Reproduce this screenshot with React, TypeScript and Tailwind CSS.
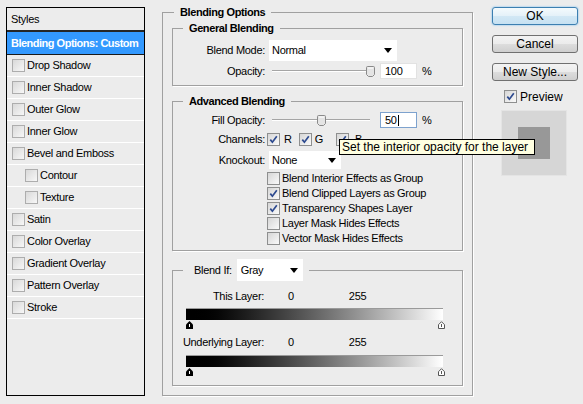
import React from "react";

function Check() {
  return (
    <svg width="9" height="9" viewBox="0 0 9 9" className="block">
      <path d="M1.3 4.6 L3.4 7.2 L7.8 1.3" fill="none" stroke="#2d4a8f" strokeWidth="1.7" />
    </svg>
  );
}

function Box({ checked, light }: { checked?: boolean; light?: boolean }) {
  return (
    <span
      className={
        light
          ? "flex h-[13px] w-[13px] shrink-0 items-center justify-center border border-[#adadad] bg-gradient-to-br from-[#d9d9d9] to-[#f7f7f7]"
          : "flex h-[13px] w-[13px] shrink-0 items-center justify-center border border-[#8e8f8f] bg-gradient-to-br from-[#d6d6d6] to-[#fafafa]"
      }
    >
      {checked && <Check />}
    </span>
  );
}

function Arrow() {
  return (
    <svg width="8" height="5" viewBox="0 0 8 5" className="block">
      <path d="M0 0 H8 L4 5 Z" fill="#000" />
    </svg>
  );
}

function Thumb() {
  return (
    <svg width="9" height="11" viewBox="0 0 9 11" className="block">
      <path
        d="M1.5 0.5 H7.5 Q8.5 0.5 8.5 1.5 V8.5 L6.5 10.5 H2.5 L0.5 8.5 V1.5 Q0.5 0.5 1.5 0.5 Z"
        fill="#e4e4e4"
        stroke="#8a8a8a"
      />
      <path d="M2 2 H7" stroke="#fff" />
    </svg>
  );
}

function SliderThumb({ dark }: { dark?: boolean }) {
  return (
    <svg width="7" height="8" viewBox="0 0 7 8" className="block">
      {dark ? (
        <>
          <path d="M3.5 0 L7 3.5 V8 H0 V3.5 Z" fill="#000" />
          <path d="M3.5 3 V6" stroke="#fff" strokeWidth="1" />
        </>
      ) : (
        <>
          <path d="M3.5 0.7 L6.5 3.7 V7.5 H0.5 V3.7 Z" fill="#fff" stroke="#555" />
          <path d="M3.5 3 V6" stroke="#555" strokeWidth="1" />
        </>
      )}
    </svg>
  );
}

const styleItems: [string, boolean][] = [
  ["Drop Shadow", false],
  ["Inner Shadow", false],
  ["Outer Glow", false],
  ["Inner Glow", false],
  ["Bevel and Emboss", false],
  ["Contour", true],
  ["Texture", true],
  ["Satin", false],
  ["Color Overlay", false],
  ["Gradient Overlay", false],
  ["Pattern Overlay", false],
  ["Stroke", false],
];

const checkRows: [string, boolean][] = [
  ["Blend Interior Effects as Group", false],
  ["Blend Clipped Layers as Group", true],
  ["Transparency Shapes Layer", true],
  ["Layer Mask Hides Effects", false],
  ["Vector Mask Hides Effects", false],
];

const fs = "border border-[#a0a0a0] shadow-[1px_1px_0_#ffffff]";

export default function App() {
  return (
    <div className="relative flex h-[404px] w-[583px] items-start overflow-hidden bg-[#ececec] font-['Liberation_Sans',Arial,sans-serif] text-[11px] tracking-[-0.3px] text-black">
      {/* Styles list */}
      <div className="ml-[6px] mt-[7px] flex h-[389px] w-[139px] flex-col border border-black bg-[#ececec]">
        <div className="flex h-[24px] items-center border-b-2 border-[#262626] pl-[4px]">Styles</div>
        <div className="flex h-[23px] items-center border-b border-[#1a1a1a] bg-[#3399ff] pl-[4px] font-bold tracking-[-0.5px] text-white">
          Blending Options: Custom
        </div>
        {styleItems.map(([label, indent]) => (
          <div
            key={label}
            className={
              indent
                ? "flex h-[22px] items-center gap-[2px] border-b border-white pl-[18px]"
                : "flex h-[22px] items-center gap-[2px] border-b border-white pl-[5px]"
            }
          >
            <Box light />
            <span>{label}</span>
          </div>
        ))}
      </div>

      {/* Blending Options */}
      <fieldset className={`ml-[17px] mt-[5px] h-[391px] w-[311px] p-0 ${fs}`}>
        <legend className="ml-[11px] px-[6px] font-bold leading-[14px] tracking-[-0.4px]">Blending Options</legend>

        {/* General Blending */}
        <fieldset className={`mx-[9px] mt-[2px] h-[65px] p-0 ${fs}`}>
          <legend className="ml-[10px] px-[6px] font-bold leading-[14px] tracking-[-0.4px]">General Blending</legend>
          <div className="mt-[5px] flex h-[21px] items-center">
            <span className="w-[92px] text-right">Blend Mode:</span>
            <div className="ml-[4px] flex h-[21px] w-[128px] items-center justify-between bg-white pl-[3px] pr-[5px]">
              <span>Normal</span>
              <Arrow />
            </div>
          </div>
          <div className="mt-[2px] flex h-[16px] items-center">
            <span className="w-[92px] text-right">Opacity:</span>
            <div className="relative ml-[4px] h-[16px] w-[105px]">
              <div className="absolute left-[3px] top-[7px] h-[2px] w-[96px] border-t border-b border-t-[#a5a5a5] border-b-white" />
              <div className="absolute left-[97px] top-[3px]">
                <Thumb />
              </div>
            </div>
            <div className="ml-[6px] flex h-[16px] w-[37px] items-center border border-[#e2e2e2] bg-white pl-[4px]">100</div>
            <span className="ml-[5px]">%</span>
          </div>
        </fieldset>

        {/* Advanced Blending */}
        <fieldset className={`mx-[9px] mt-[8px] h-[157px] p-0 ${fs}`}>
          <legend className="ml-[10px] px-[6px] font-bold leading-[14px] tracking-[-0.4px]">Advanced Blending</legend>
          <div className="mt-[4px] flex h-[16px] items-center">
            <span className="w-[92px] text-right">Fill Opacity:</span>
            <div className="relative ml-[4px] h-[16px] w-[105px]">
              <div className="absolute left-[3px] top-[7px] h-[2px] w-[98px] border-t border-b border-t-[#a5a5a5] border-b-white" />
              <div className="absolute left-[48px] top-[3px]">
                <Thumb />
              </div>
            </div>
            <div className="ml-[6px] flex h-[16px] w-[37px] items-center border border-[#7da2ce] bg-white pl-[4px]">
              50<span className="ml-[1px] h-[11px] w-px bg-black" />
            </div>
            <span className="ml-[5px]">%</span>
          </div>
          <div className="mt-[4px] flex h-[15px] items-center">
            <span className="w-[92px] text-right">Channels:</span>
            <span className="ml-[2px]">
              <Box checked />
            </span>
            <span className="ml-[4px]">R</span>
            <span className="ml-[7px]">
              <Box checked />
            </span>
            <span className="ml-[3px]">G</span>
            <span className="ml-[13px]">
              <Box checked />
            </span>
            <span className="ml-[6px]">B</span>
          </div>
          <div className="mt-[4px] flex h-[18px] items-center">
            <span className="w-[92px] text-right">Knockout:</span>
            <div className="ml-[4px] flex h-[18px] w-[72px] items-center justify-between bg-white pl-[3px] pr-[5px]">
              <span>None</span>
              <Arrow />
            </div>
          </div>
          <div className="mt-[2px] flex flex-col">
            {checkRows.map(([label, checked]) => (
              <div key={label} className="flex h-[15px] items-center pl-[94px]">
                <Box checked={checked} />
                <span className="ml-[2px]">{label}</span>
              </div>
            ))}
          </div>
        </fieldset>

        {/* Blend If */}
        <fieldset className={`mx-[9px] mt-[8px] h-[127px] p-0 ${fs}`}>
          <legend className="ml-[10px] pl-[11px] pr-[6px]">
            <div className="flex items-center">
              <span>Blend If:</span>
              <div className="ml-[5px] flex h-[22px] w-[66px] items-center justify-between bg-white pl-[4px] pr-[5px]">
                <span>Gray</span>
                <Arrow />
              </div>
            </div>
          </legend>
          <div className="mt-[8px] flex h-[14px] items-center">
            <span className="w-[91px] text-right">This Layer:</span>
            <span className="ml-[24px]">0</span>
            <span className="ml-[55px]">255</span>
          </div>
          <div className="ml-[13px] mt-[5px] h-[12px] w-[257px] border-t border-[#9a9a9a] bg-gradient-to-r from-black to-white" />
          <div className="ml-[13px] mt-[1px] flex h-[8px] w-[259px] justify-between">
            <SliderThumb dark />
            <SliderThumb />
          </div>
          <div className="mt-[6px] flex h-[14px] items-center">
            <span className="w-[91px] text-right">Underlying Layer:</span>
            <span className="ml-[24px]">0</span>
            <span className="ml-[55px]">255</span>
          </div>
          <div className="ml-[13px] mt-[6px] h-[12px] w-[257px] border-t border-[#9a9a9a] bg-gradient-to-r from-black to-white" />
          <div className="ml-[13px] mt-[1px] flex h-[8px] w-[259px] justify-between">
            <SliderThumb dark />
            <SliderThumb />
          </div>
        </fieldset>
      </fieldset>

      {/* Right column */}
      <div className="ml-[19px] mt-[7px] flex w-[86px] flex-col text-[12px] tracking-normal">
        <button className="h-[18px] w-[86px] rounded-[3px] border border-[#3c7fb1] bg-[linear-gradient(#f4fafd_0%,#e4f1f9_50%,#d2e8f5_50%,#c6e1f2_100%)] leading-[16px] shadow-[0_0_2px_#5fb3f0]">
          OK
        </button>
        <button className="mt-[10px] h-[18px] w-[86px] rounded-[3px] border border-[#707070] bg-[linear-gradient(#f3f3f3_0%,#ebebeb_50%,#dddddd_50%,#cfcfcf_100%)] leading-[16px]">
          Cancel
        </button>
        <button className="mt-[10px] h-[18px] w-[86px] rounded-[3px] border border-[#707070] bg-[linear-gradient(#f3f3f3_0%,#ebebeb_50%,#dddddd_50%,#cfcfcf_100%)] leading-[16px]">
          New Style...
        </button>
        <div className="ml-[12px] mt-[9px] flex h-[13px] items-center">
          <Box checked />
          <span className="ml-[3px]">Preview</span>
        </div>
        <div className="ml-[9px] mt-[7px] flex h-[66px] w-[66px] items-center justify-center border border-[#e4e4e4] bg-[#d6d6d6]">
          <div className="h-[32px] w-[32px] bg-[#989898]" />
        </div>
      </div>

      {/* Tooltip */}
      <div className="absolute left-[339px] top-[139px] flex h-[16px] w-[196px] items-center border border-black bg-[#ffffe1] pl-[2px] text-[12px] leading-[14px] tracking-normal">
        Set the interior opacity for the layer
      </div>
    </div>
  );
}
